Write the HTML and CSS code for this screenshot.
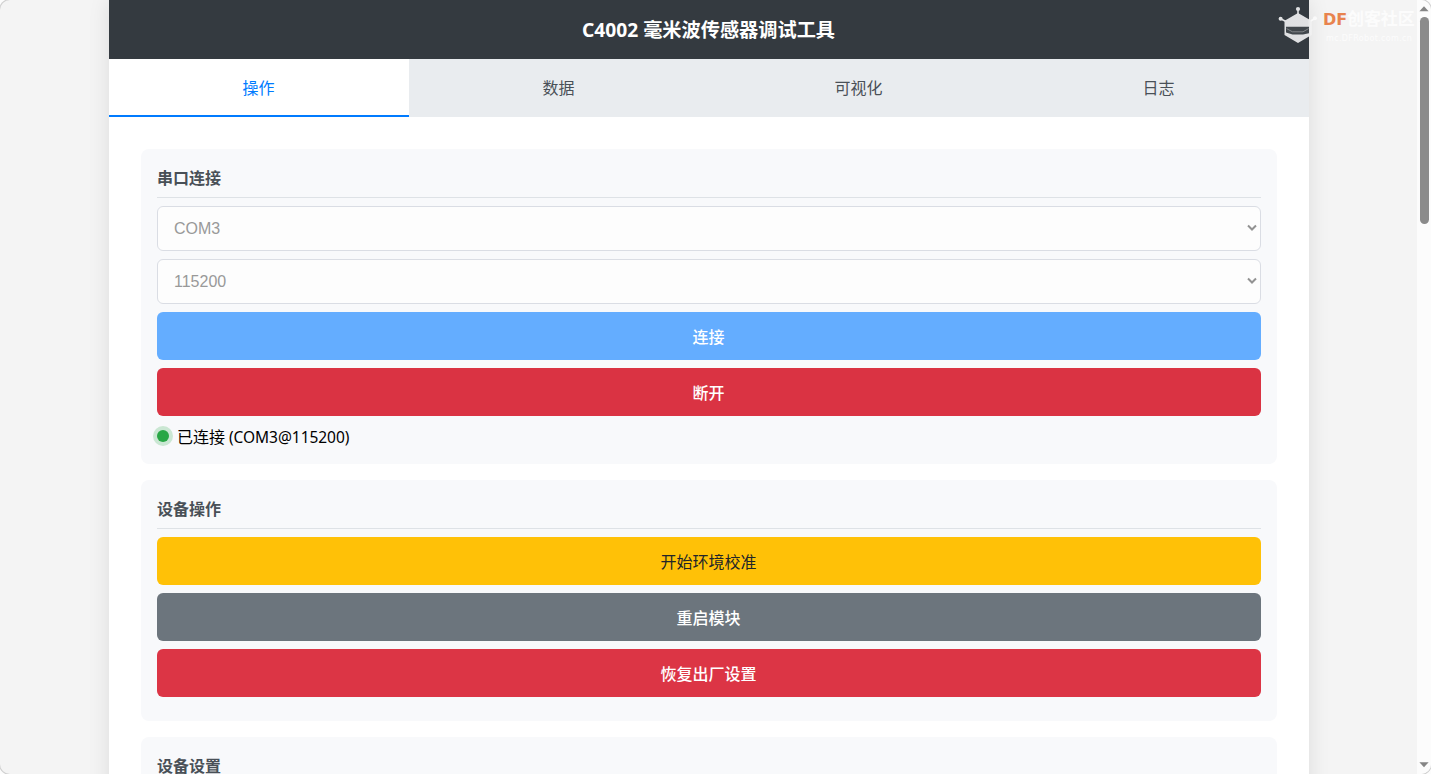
FILE: index.html
```html
<!DOCTYPE html>
<html lang="zh-CN">
<head>
<meta charset="utf-8">
<title>C4002 毫米波传感器调试工具</title>
<link rel="stylesheet" href="styles.css">
</head>
<body>
<div class="window">
  <div class="viewport">
    <main class="container">
      <header class="header"><h1><span class="model">C4002</span> 毫米波传感器调试工具</h1></header>
      <nav class="tabs">
        <a class="tab active">操作</a>
        <a class="tab">数据</a>
        <a class="tab">可视化</a>
        <a class="tab">日志</a>
      </nav>
      <div class="content">
        <section class="card connection">
          <h2>串口连接</h2>
          <div class="stack">
            <div class="field"><select disabled><option>COM3</option></select><svg class="chevron" viewBox="0 0 10 6"><path d="M1 1l4 4 4-4"/></svg></div>
            <div class="field"><select disabled><option>115200</option></select><svg class="chevron" viewBox="0 0 10 6"><path d="M1 1l4 4 4-4"/></svg></div>
            <button class="btn primary">连接</button>
            <button class="btn danger hover">断开</button>
          </div>
          <div class="status"><span class="dot"></span><span>已连接</span><span class="port">(COM3@115200)</span></div>
        </section>
        <section class="card actions">
          <h2>设备操作</h2>
          <div class="stack">
            <button class="btn warning">开始环境校准</button>
            <button class="btn secondary">重启模块</button>
            <button class="btn danger">恢复出厂设置</button>
          </div>
        </section>
        <section class="card">
          <h2>设备设置</h2>
        </section>
      </div>
    </main>
  </div>
  <div class="scrollbar">
    <svg class="arrow" viewBox="0 0 10 6"><path d="M5 .3L9.6 5.3H.4z"/></svg>
    <div class="thumb"></div>
    <svg class="arrow down" viewBox="0 0 10 6"><path d="M.4 .3H9.6L5 5.3z"/></svg>
  </div>
  <div class="watermark">
    <svg class="robot" viewBox="0 0 40 38">
      <defs><linearGradient id="metal"><stop offset="0" stop-color="#dfe0e2"/><stop offset=".85" stop-color="#e0e1e3"/><stop offset="1" stop-color="#f6f6f6"/></linearGradient></defs>
      <path d="M20 3v6M3 13l6 3" stroke="#e0e1e3" stroke-width="1.6"/>
      <path d="M37 12.5l-6 3.5" stroke="#fafafa" stroke-width="1.6"/>
      <circle cx="20" cy="3" r="2.1" fill="#e0e1e3"/><circle cx="2.6" cy="12.8" r="2" fill="#e0e1e3"/><circle cx="37" cy="12.3" r="2" fill="#fafafa"/>
      <path d="M20 7L33.5 14.8V29L20 37 6.5 29V14.8z" fill="url(#metal)"/>
      <path d="M8 20.8h23v6.4L25 28.6H14.500L8 26.500z" fill="#41474c"/>
      <path d="M8.600 22.600l5.800 3.200h10.600l5.600-3.200" fill="none" stroke="#a9acaf" stroke-width=".6"/>
    </svg>
    <div class="brand">
      <div class="brand-name"><span class="df">DF</span>创客社区</div>
      <div class="brand-url">mc.DFRobot.com.cn</div>
    </div>
  </div>
</div>
</body>
</html>
```
FILE: styles.css
```css
* { box-sizing: border-box; }
html { background: #fcfcfc; overflow: hidden; }
body { margin: 0; font-family: "Noto Sans", "Noto Sans CJK SC", sans-serif; font-size: 16px; color: #000; }
h1, h2 { margin: 0; }
.window { position: relative; display: flex; height: 774px; overflow: hidden; border-radius: 10px; background: #f4f4f4; box-shadow: 0 0 0 1px #d0d0d0; }
.viewport { flex: 1; height: 774px; overflow: hidden; padding-left: 109px; }
.container { width: 1200px; min-height: 900px; background: #fff; box-shadow: 0 0 20px rgba(0, 0, 0, .1); }
.header { height: 59px; background: #343a40; color: #fff; display: flex; justify-content: center; align-items: center; }
.header h1 { font-size: 19.2px; line-height: 26px; font-weight: 700; white-space: pre; padding: 1px 1px 0 0; }
.tabs { display: grid; grid-template-columns: repeat(4, 1fr); height: 58px; background: #e9ecef; }
.tab { display: flex; align-items: center; justify-content: center; border-bottom: 2px solid transparent; color: #495057; padding-right: 1px; }
.tab.active { background: #fff; color: #007bff; border-color: #007bff; }
.content { padding: 32px; }
.card { padding: 17px 16px 16px; margin-bottom: 16px; border-radius: 8px; background: #f8f9fb; }
.card.connection { height: 315px; }
.card.actions { height: 241px; }
.card h2 { height: 32px; margin-bottom: 8px; border-bottom: 1px solid #dee2e6; color: #495057; font-size: 16px; line-height: 25px; font-weight: 700; }
.stack { display: flex; flex-direction: column; gap: 8px; }
.field { position: relative; height: 45px; }
.field select { appearance: none; width: 100%; height: 45px; padding: 0 16px; border: 1px solid #dadde4; border-radius: 6px; background: #fdfdfd; color: #999; font: 16px "Liberation Sans", Arial, sans-serif; opacity: 1; }
.chevron { position: absolute; right: 4px; top: 18px; width: 10px; height: 7px; fill: none; stroke: #929292; stroke-width: 2; }
.btn { height: 48px; padding: 0 1px 0 0; border: 0; border-radius: 6px; color: #fff; font: 500 16px "Noto Sans CJK SC", sans-serif; }
.primary { background: #64adff; }
.danger { background: #dc3545; }
.danger.hover { background: #da3343; }
.warning { background: #ffc107; color: #212529; font-weight: 400; }
.secondary { background: #6c757d; }
.status { display: flex; align-items: center; height: 24px; margin-top: 9px; line-height: 24px; }
.dot { width: 12px; height: 12px; margin: -2px 8px 0 0; border-radius: 50%; background: #28a745; box-shadow: 0 0 0 4px rgba(40, 167, 69, .22); }
.port { margin-left: 4px; font-size: 15.5px; letter-spacing: -.05px; }
.scrollbar { width: 14px; display: flex; flex-direction: column; align-items: center; background: #fcfcfc; padding: 6px 0 6px; }
.arrow { width: 10px; height: 6px; fill: #858585; }
.arrow.down { margin-top: auto; }
.thumb { width: 9px; height: 207px; margin-top: 5px; border-radius: 5px; background: #8b8b8b; }
.watermark { position: absolute; left: 1278px; top: 6px; display: flex; }
.robot { width: 40px; height: 38px; fill: none; }
.brand { padding-left: 5px; color: #fcfcfc; }
.brand-name { font: 700 17px/26px "DejaVu Sans", "Noto Sans CJK SC", sans-serif; white-space: nowrap; letter-spacing: -.1px; }
.df { color: #e8834e; font-size: 16px; }
.brand-url { margin: -1px 0 0 3px; font: 8px/13px "DejaVu Sans", sans-serif; letter-spacing: .35px; }
```
